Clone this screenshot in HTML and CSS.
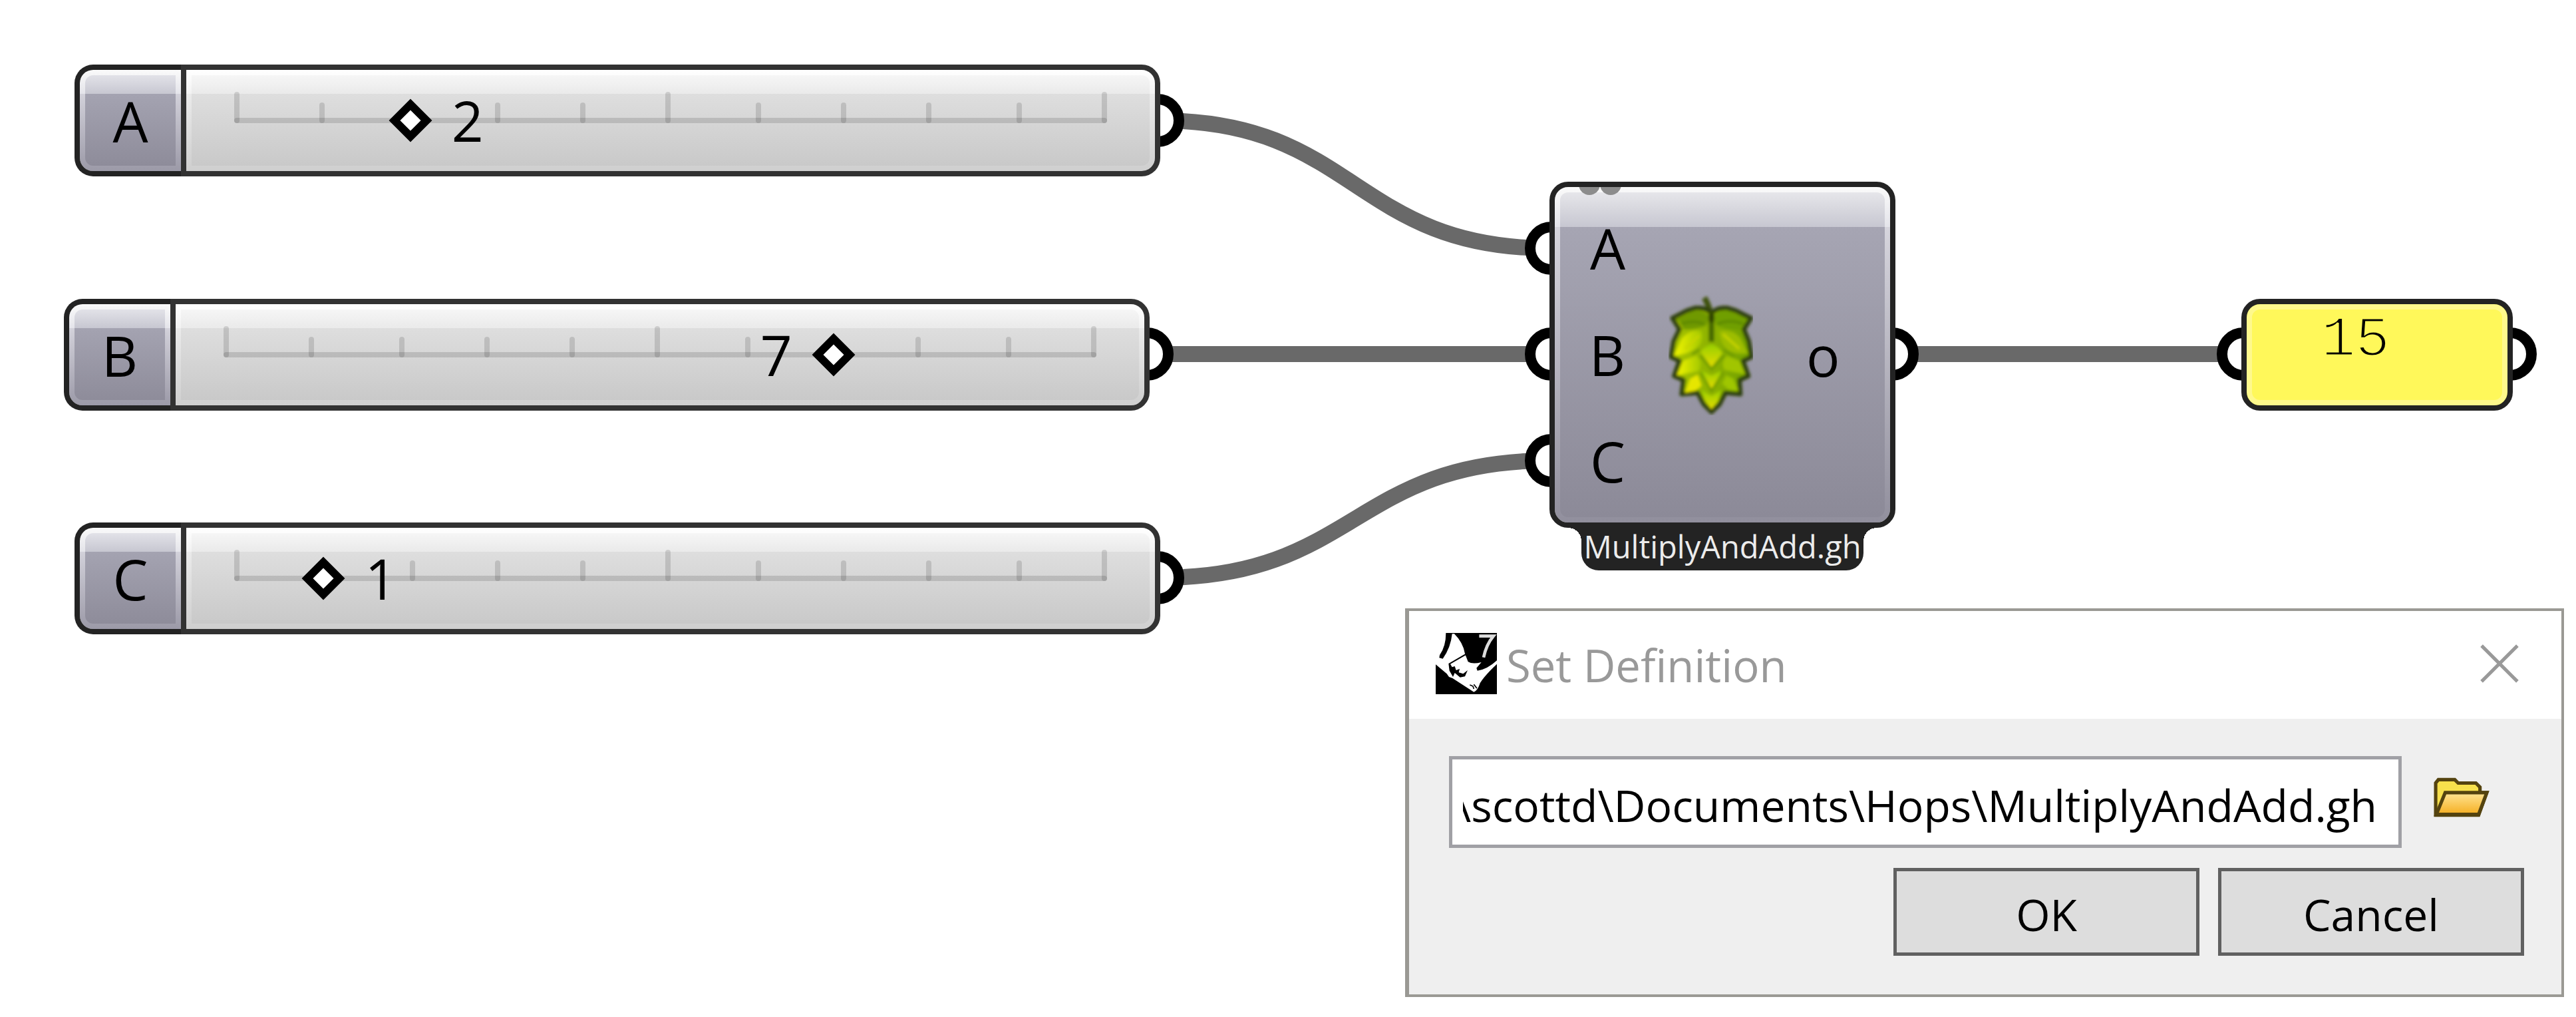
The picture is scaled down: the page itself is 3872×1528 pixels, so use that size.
FILE: index.html
```
<!DOCTYPE html>
<html lang="en">
<head>
<meta charset="utf-8">
<title>MultiplyAndAdd.gh</title>
<link rel="stylesheet" href="styles.css">
</head>

<body>

<!-- tick marks shared by the three sliders -->
<svg class="defs" aria-hidden="true">
  <symbol id="ticks" viewBox="0 0 1312 48">
    <g stroke="#000" stroke-opacity=".13" stroke-width="8" stroke-linecap="round">
      <path d="M4 44H1308"/>
      <path d="M4 5V44"/><path d="M132 21V44"/><path d="M268 21V44"/><path d="M396 21V44"/>
      <path d="M524 21V44"/><path d="M652 5V44"/><path d="M788 21V44"/><path d="M916 21V44"/>
      <path d="M1044 21V44"/><path d="M1180 21V44"/><path d="M1308 5V44"/>
    </g>
  </symbol>
</svg>

<main class="canvas">

  <svg class="wires" aria-hidden="true">
    <g class="wire">
      <path d="M1744 181C2036 181 2036 373 2328 373"/>
      <path d="M1728 532H2328"/>
      <path d="M1744 868C2036 868 2036 692 2328 692"/>
      <path d="M2848 532H3368"/>
    </g>
    <g class="grip">
      <circle cx="1740" cy="181" r="32"/>
      <circle cx="1724" cy="532" r="32"/>
      <circle cx="1740" cy="868" r="32"/>
      <circle cx="2332" cy="373" r="32"/>
      <circle cx="2332" cy="532" r="32"/>
      <circle cx="2332" cy="692" r="32"/>
      <circle cx="2844" cy="532" r="32"/>
      <circle cx="3372" cy="532" r="32"/>
      <circle cx="3773" cy="532" r="32"/>
    </g>
  </svg>

  <div class="node slider slider-a">
    <label class="slider-name" for="a">A</label>
    <div class="slider-body">
      <div class="scale">
        <svg class="ticks" aria-hidden="true"><use href="#ticks"/></svg>
        <input id="a" type="range" min="0" max="10" value="2">
        <output class="value" for="a" style="--value: 2">2</output>
      </div>
    </div>
  </div>

  <div class="node slider slider-b">
    <label class="slider-name" for="b">B</label>
    <div class="slider-body">
      <div class="scale">
        <svg class="ticks" aria-hidden="true"><use href="#ticks"/></svg>
        <input id="b" type="range" min="0" max="10" value="7">
        <output class="value before" for="b" style="--value: 7">7</output>
      </div>
    </div>
  </div>

  <div class="node slider slider-c">
    <label class="slider-name" for="c">C</label>
    <div class="slider-body">
      <div class="scale">
        <svg class="ticks" aria-hidden="true"><use href="#ticks"/></svg>
        <input id="c" type="range" min="0" max="10" value="1">
        <output class="value" for="c" style="--value: 1">1</output>
      </div>
    </div>
  </div>

  <div class="node hops">
    <div class="hops-body">
      <svg class="dots" viewBox="0 0 64 16" aria-hidden="true">
        <circle cx="16" cy="-4" r="16"/><circle cx="48" cy="-4" r="16"/>
      </svg>
      <ul class="inputs">
        <li>A</li>
        <li>B</li>
        <li>C</li>
      </ul>
      <svg class="hop" viewBox="85 50 380 545" aria-hidden="true">
        <defs>
          <linearGradient id="leaf" x1="0" x2="1"><stop offset="0" stop-color="#f2f400"/><stop offset="1" stop-color="#a3c800"/></linearGradient>
          <linearGradient id="cone" x1="0" x2="1"><stop offset="0" stop-color="#a9c400"/><stop offset="1" stop-color="#6f9f00"/></linearGradient>
          <linearGradient id="tip" x1="0" x2="0" y1="0" y2="1"><stop offset="0" stop-color="#97cf00"/><stop offset="1" stop-color="#e6dc00"/></linearGradient>
          <filter id="soft"><feGaussianBlur stdDeviation="6"/></filter>
        </defs>
        <g filter="url(#soft)" stroke-linejoin="round">
          <path d="M246 66Q262 90 276 140" fill="none" stroke="#40520f" stroke-width="26"/>
          <path d="M278 136Q255 108 205 112L168 124L102 158L134 208L108 262L96 332L134 350L110 418L152 436L144 500L216 494L244 546L278 580L314 546L340 494L408 500L404 436L444 418L420 350L458 332L446 262L424 208L456 158L388 124L350 112Q302 108 278 136Z" fill="url(#cone)" stroke="#2f3f08" stroke-width="20"/>
          <path d="M268 150Q240 120 196 124L116 164Q145 174 150 208Q215 210 256 190Z" fill="#6f9900"/>
          <path d="M288 150Q312 120 350 124L444 164Q412 174 408 208Q345 212 300 190Z" fill="#6f9f00"/>
          <path d="M140 184Q200 164 244 184M420 184Q365 160 304 184" fill="none" stroke="#588300" stroke-width="9"/>
          <path d="M232 216Q180 206 144 250L110 326Q180 320 216 286Q246 260 232 216Z" fill="url(#leaf)"/>
          <path d="M314 216Q370 206 406 244L442 316Q388 324 350 300Q316 270 314 216Z" fill="#9dbd00"/>
          <path d="M224 236L158 296M330 230L404 296" stroke="#c9d500" stroke-width="10"/>
          <path d="M210 326L150 350L122 416L176 404L220 396Q244 354 210 326Z" fill="url(#leaf)"/>
          <path d="M348 328L404 350L430 410L380 400L336 390Q318 356 348 328Z" fill="#a1c500"/>
          <path d="M216 412L182 430L158 494L206 484L234 462Z" fill="#e6e600"/>
          <path d="M344 416L376 430L400 486L354 478L326 452Z" fill="#9fc600"/>
          <path d="M278 276Q236 290 230 312L278 378L328 316Q314 286 278 276Z" fill="url(#tip)"/>
          <path d="M234 394L278 416L320 394L316 436L278 474L242 436Z" fill="url(#tip)"/>
          <path d="M234 482L278 508L322 482L308 530L278 568L246 526Z" fill="url(#tip)"/>
          <path d="M278 130V264" stroke="#446700" stroke-width="24"/>
          <path d="M278 134V176" stroke="#2d4300" stroke-width="24"/>
          <path d="M228 326L278 388L334 326M230 402L278 486L330 402M190 320L224 300M334 300L380 330" fill="none" stroke="#6e9a00" stroke-width="10"/>
        </g>
      </svg>
      <span class="result">o</span>
    </div>
    <div class="tag">MultiplyAndAdd.gh</div>
  </div>

  <div class="node panel">15</div>

  <form class="dialog" role="dialog" aria-labelledby="dialog-title">
    <header class="titlebar">
      <svg class="logo" viewBox="0 0 276 276" aria-hidden="true">
        <path d="M0 0H276V276H0Z"/>
        <path d="M0 0H46Q46 60 18 100L16 112L32 116Q68 66 74 4L84 4Q124 44 132 94L146 130Q166 142 206 132L184 158L188 170Q230 166 276 124V140Q222 190 200 226Q190 260 172 266L76 204L60 198L50 184L0 142Z" fill="#fff"/>
        <path d="M134 94L58 138L62 170L78 198L86 180L110 200L132 196L144 168L124 184L104 178L108 162L92 168L86 150L74 154L66 140L136 100Z"/>
        <path d="M154 234L168 240L172 252M172 232L186 250" fill="none" stroke="#000" stroke-width="5"/>
        <path d="M196 14H260Q228 52 216 110" fill="none" stroke="#ddd" stroke-width="14"/>
      </svg>
      <h1 id="dialog-title">Set Definition</h1>
      <button class="close" type="button" aria-label="Close">
        <svg viewBox="0 0 56 56" aria-hidden="true"><path d="M2 2L54 54M54 2L2 54"/></svg>
      </button>
    </header>
    <div class="dialog-body">
      <div class="row">
        <input class="path" type="text" aria-label="Definition path" value="\scottd\Documents\Hops\MultiplyAndAdd.gh">
        <button class="browse" type="button" aria-label="Browse">
          <svg viewBox="0 0 82 58" aria-hidden="true">
            <defs>
              <linearGradient id="front" x1="0" x2="0" y1="0" y2="1"><stop offset="0" stop-color="#ffe595"/><stop offset="1" stop-color="#f5ae20"/></linearGradient>
            </defs>
            <path d="M3 55V8L7 3H31L36 8H62L68 14V22H78L66 55Z" fill="#f7e04c" stroke="#54430f" stroke-width="5"/>
            <path d="M4 54L17 22H78L66 54Z" fill="url(#front)" stroke="#54430f" stroke-width="5"/>
          </svg>
        </button>
      </div>
      <div class="row actions">
        <button class="btn" type="submit">OK</button>
        <button class="btn" type="button">Cancel</button>
      </div>
    </div>
  </form>

</main>

</body>
</html>
```

FILE: styles.css
```
* {
  box-sizing: border-box;
}

body {
  margin: 0;
  background-color: white;
  color: black;
  font-family: "Open Sans", "Noto Sans", sans-serif;
}

button, input {
  font: inherit;
  color: inherit;
}

.defs {
  display: none;
}

/* canvas */

.canvas {
  position: relative;
  min-height: 100vh;
  overflow: hidden;
  font-size: 84px;
}

.wires {
  position: absolute;
  top: 0;
  left: 0;
  width: 100%;
  height: 100%;
}

.wire {
  fill: none;
  stroke: #696969;
  stroke-width: 24px;
}

.grip {
  fill: white;
  stroke: black;
  stroke-width: 16px;
}

.node {
  position: absolute;
}

/* sliders */

.slider {
  display: flex;
  width: 1632px;
  height: 168px;
}

.slider-a {
  left: 112px;
  top: 97px;
}

.slider-b {
  left: 96px;
  top: 449px;
}

.slider-c {
  left: 112px;
  top: 785px;
}

.slider-name {
  display: flex;
  align-items: center;
  justify-content: center;
  width: 160px;
  padding: 8px;
  border: 8px solid #232323;
  border-right: none;
  border-radius: 28px 0 0 28px;
  background:
    linear-gradient(#e2e2e8, #c7c7d1 28px, #a4a3b1 28px, #8e8c9a) content-box,
    linear-gradient(#fafafa, #e4e4ea 36px, #d2d1da 36px, #9c9aa8) padding-box;
}

.slider-body {
  flex: 1;
  display: flex;
  padding: 8px;
  border: 8px solid #323232;
  border-radius: 0 28px 28px 0;
  background:
    linear-gradient(#f6f6f6, #eaeaea 28px, #dedede 28px, #c9c9c9) content-box,
    linear-gradient(#ffffff, #f2f2f2 36px, #eaeaea 36px, #cfcfcf) padding-box;
}

.scale {
  position: relative;
  flex: 1;
  height: 48px;
  margin: 24px 64px;
}

.ticks {
  display: block;
  width: 100%;
  height: 48px;
}

/* the thumb centre runs between the first and the last tick */
.scale input {
  -webkit-appearance: none;
  appearance: none;
  position: absolute;
  left: -19px;
  top: 12px;
  width: calc(100% + 38px);
  height: 64px;
  margin: 0;
  background: none;
}

.scale input::-webkit-slider-thumb {
  -webkit-appearance: none;
  appearance: none;
  width: 46px;
  height: 46px;
  border: 12px solid black;
  background-color: white;
  transform: rotate(45deg);
}

.value {
  position: absolute;
  left: calc(4px + (100% - 8px) * var(--value) / 10 + 62px);
  top: 12px;
  width: 48px;
  line-height: 64px;
  text-align: center;
}

.value.before {
  left: calc(4px + (100% - 8px) * var(--value) / 10 - 110px);
}

/* hops component */

.hops {
  left: 2329px;
  top: 273px;
  display: flex;
  flex-direction: column;
  align-items: center;
  width: 520px;
}

.hops-body {
  position: relative;
  display: grid;
  grid-template-columns: 98px 1fr 134px;
  align-items: center;
  width: 100%;
  height: 520px;
  padding: 8px;
  border: 8px solid #232323;
  border-radius: 28px;
  background:
    linear-gradient(#e6e6ea, #c7c7d1 52px, #a6a5b3 52px, #8c8a98) content-box,
    linear-gradient(#fafafa, #e4e4ea 60px, #d6d5dd 60px, #918f9d) padding-box;
}

.dots {
  position: absolute;
  left: 36px;
  top: 0;
  width: 64px;
  height: 16px;
  fill: #8c8c8c;
}

.inputs {
  margin: 0;
  padding: 0;
  list-style: none;
  text-align: right;
  line-height: 160px;
}

.hop {
  justify-self: center;
  width: 127px;
  height: 182px;
}

.result {
  padding-left: 16px;
}

.tag {
  position: relative;
  width: 424px;
  padding-bottom: 8px;
  border-radius: 0 0 26px 26px;
  background-color: #232323;
  color: #ececec;
  font-size: 47px;
  line-height: 56px;
  text-align: center;
  white-space: nowrap;
}

.tag::before,
.tag::after {
  content: "";
  position: absolute;
  top: 0;
  width: 20px;
  height: 20px;
  background: radial-gradient(circle at 0 100%, transparent 20px, #232323 20px);
}

.tag::before {
  right: 100%;
}

.tag::after {
  left: 100%;
  transform: scaleX(-1);
}

/* panel */

.panel {
  left: 3369px;
  top: 449px;
  width: 408px;
  height: 168px;
  padding: 8px 8px 8px 112px;
  border: 8px solid #232323;
  border-radius: 28px;
  background-color: #fff85a;
  box-shadow: inset 0 0 0 8px #fff98c;
  font-family: "Liberation Mono", monospace;
  font-size: 86px;
  line-height: 92px;
  /* thins the digits */
  -webkit-text-stroke: 3px #fff85a;
}

/* dialog */

.dialog {
  position: absolute;
  left: 2112px;
  top: 914px;
  width: 1742px;
  border: 4px solid #9a9994;
  border-left-width: 6px;
  background-color: #efefef;
  font-size: 66px;
}

.titlebar {
  display: flex;
  align-items: center;
  gap: 14px;
  height: 162px;
  padding: 0 64px 4px 40px;
  background-color: white;
}

.logo {
  width: 92px;
  height: 92px;
}

.titlebar h1 {
  flex: 1;
  margin: 0;
  padding-top: 4px;
  color: #999;
  font-size: 67px;
  font-weight: normal;
}

.close,
.browse {
  display: flex;
  padding: 0;
  border: none;
  background: none;
}

.close svg {
  width: 58px;
  height: 58px;
  fill: none;
  stroke: #999;
  stroke-width: 5px;
}

.dialog-body {
  padding: 56px 56px 58px 60px;
}

.row {
  display: flex;
  align-items: center;
  gap: 48px;
}

.path {
  flex: 1;
  min-width: 0;
  height: 138px;
  padding: 8px 16px 0;
  border: 5px solid #a0a0a5;
  background-color: white;
  text-indent: -12px;
}

.browse {
  width: 136px;
  padding-bottom: 14px;
}

.browse svg {
  width: 84px;
  height: 60px;
}

.actions {
  justify-content: flex-end;
  gap: 28px;
  margin-top: 30px;
}

.btn {
  width: 460px;
  height: 132px;
  padding: 6px 0 0;
  border: 5px solid #606060;
  background-color: #dddddd;
}
```
